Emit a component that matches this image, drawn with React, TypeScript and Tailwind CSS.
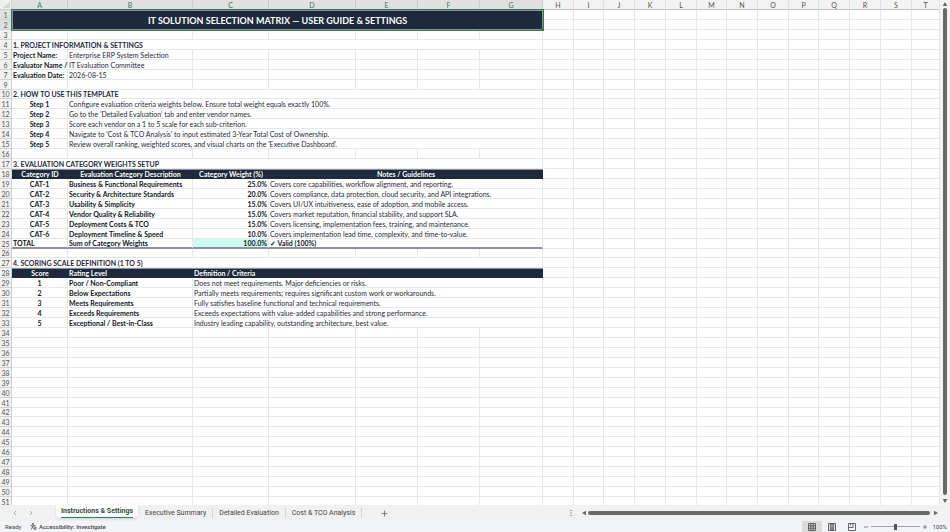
import type { ReactNode } from 'react';

type Cell = {
  text?: ReactNode;
  span?: number;
  rows?: number;
  className: string;
};

const COLUMNS = [
  { name: 'A', width: 'w-[56px]' },
  { name: 'B', width: 'w-[125px]' },
  { name: 'C', width: 'w-[76px]' },
  { name: 'D', width: 'w-[87px]' },
  { name: 'E', width: 'w-[62px]' },
  { name: 'F', width: 'w-[62px]' },
  { name: 'G', width: 'w-[63px]' },
  { name: 'H', width: 'w-[31px]' },
  { name: 'I', width: 'w-[30px]' },
  { name: 'J', width: 'w-[31px]' },
  { name: 'K', width: 'w-[31px]' },
  { name: 'L', width: 'w-[31px]' },
  { name: 'M', width: 'w-[30px]' },
  { name: 'N', width: 'w-[31px]' },
  { name: 'O', width: 'w-[31px]' },
  { name: 'P', width: 'w-[30px]' },
  { name: 'Q', width: 'w-[31px]' },
  { name: 'R', width: 'w-[31px]' },
  { name: 'S', width: 'w-[31px]' },
  { name: 'T', width: '' },
];

const USED = 7;

// Row 8 is hidden in the sheet
const ROWS = Array.from({ length: 51 }, (_, i) => i + 1).filter((n) => n !== 8);

const GRID = 'border-r border-b border-[#e6e8ec]';
const NAVY = 'border-y border-t-[#8b909b] border-b-[#1e293b] bg-[#1e293b] font-bold text-white';
const INPUT = `${GRID} text-[#1f2937]`;
const BOLD = `${GRID} font-bold text-[#111827]`;
const TOTAL = 'border-b-2 border-b-[#8b909b] border-r border-r-[#e6e8ec] font-bold text-[#111827]';

const heading = (text: string): Cell[] => [
  { text, span: 7, className: `${GRID} font-bold text-[#1e293b]` },
];

const project = (label: string, value: string): Cell[] => [
  { text: label, className: BOLD },
  { text: value, className: INPUT },
];

const step = (n: number, text: string): Cell[] => [
  { text: `Step ${n}`, className: `text-center ${BOLD}` },
  { text, span: 6, className: INPUT },
];

const category = (n: number, name: string, weight: string, note: string): Cell[] => [
  { text: `CAT-${n}`, className: `text-center ${BOLD}` },
  { text: name, className: BOLD },
  { text: weight, className: `text-right ${BOLD}` },
  { text: note, span: 4, className: INPUT },
];

const score = (n: number, level: string, text: string): Cell[] => [
  { text: n, className: `text-center ${BOLD}` },
  { text: level, className: BOLD },
  { text, span: 5, className: INPUT },
];

const CONTENT: Record<number, Cell[]> = {
  1: [
    {
      text: 'IT SOLUTION SELECTION MATRIX — USER GUIDE & SETTINGS',
      span: 7,
      rows: 2,
      className:
        'relative border border-[#8b909b] bg-[#1e293b] text-center text-[9px] leading-[16px] font-bold text-white outline-1 outline-[#2f7d4f]',
    },
  ],
  2: [],
  4: heading('1. PROJECT INFORMATION & SETTINGS'),
  5: project('Project Name:', 'Enterprise ERP System Selection'),
  6: project('Evaluator Name /', 'IT Evaluation Committee'),
  7: project('Evaluation Date:', '2026-08-15'),
  10: heading('2. HOW TO USE THIS TEMPLATE'),
  11: step(1, 'Configure evaluation criteria weights below. Ensure total weight equals exactly 100%.'),
  12: step(2, "Go to the 'Detailed Evaluation' tab and enter vendor names."),
  13: step(3, 'Score each vendor on a 1 to 5 scale for each sub-criterion.'),
  14: step(4, "Navigate to 'Cost & TCO Analysis' to input estimated 3-Year Total Cost of Ownership."),
  15: step(5, "Review overall ranking, weighted scores, and visual charts on the 'Executive Dashboard'."),
  17: heading('3. EVALUATION CATEGORY WEIGHTS SETUP'),
  18: [
    { text: 'Category ID', className: `text-center ${NAVY}` },
    { text: 'Evaluation Category Description', className: `text-center ${NAVY}` },
    { text: 'Category Weight (%)', className: `text-center ${NAVY}` },
    { text: 'Notes / Guidelines', span: 4, className: `text-center ${NAVY}` },
  ],
  19: category(1, 'Business & Functional Requirements', '25.0%', 'Covers core capabilities, workflow alignment, and reporting.'),
  20: category(2, 'Security & Architecture Standards', '20.0%', 'Covers compliance, data protection, cloud security, and API integrations.'),
  21: category(3, 'Usability & Simplicity', '15.0%', 'Covers UI/UX intuitiveness, ease of adoption, and mobile access.'),
  22: category(4, 'Vendor Quality & Reliability', '15.0%', 'Covers market reputation, financial stability, and support SLA.'),
  23: category(5, 'Deployment Costs & TCO', '15.0%', 'Covers licensing, implementation fees, training, and maintenance.'),
  24: category(6, 'Deployment Timeline & Speed', '10.0%', 'Covers implementation lead time, complexity, and time-to-value.'),
  25: [
    { text: 'TOTAL', className: TOTAL },
    { text: 'Sum of Category Weights', className: TOTAL },
    { text: '100.0%', className: `bg-[#ccfbf1] text-right ${TOTAL}` },
    { text: '✓ Valid (100%)', span: 4, className: TOTAL },
  ],
  27: heading('4. SCORING SCALE DEFINITION (1 TO 5)'),
  28: [
    { text: 'Score', className: `text-center ${NAVY}` },
    { text: 'Rating Level', className: NAVY },
    { text: 'Definition / Criteria', span: 5, className: NAVY },
  ],
  29: score(1, 'Poor / Non-Compliant', 'Does not meet requirements. Major deficiencies or risks.'),
  30: score(2, 'Below Expectations', 'Partially meets requirements; requires significant custom work or workarounds.'),
  31: score(3, 'Meets Requirements', 'Fully satisfies baseline functional and technical requirements.'),
  32: score(4, 'Exceeds Requirements', 'Exceeds expectations with value-added capabilities and strong performance.'),
  33: score(5, 'Exceptional / Best-in-Class', 'Industry leading capability, outstanding architecture, best value.'),
};

const TABS = ['Instructions & Settings', 'Executive Summary', 'Detailed Evaluation', 'Cost & TCO Analysis'];

function SheetRow({ n }: { n: number }) {
  const cells = CONTENT[n];
  const filled = cells ? cells.reduce((sum, c) => sum + (c.span ?? 1), 0) : 0;
  const blanks = COLUMNS.slice(n === 2 ? USED : filled);

  return (
    <tr className="h-[9px]">
      <th
        scope="row"
        className={`border-r border-b border-[#d0d0d0] p-0 text-center align-bottom font-normal ${
          n <= 2 ? 'bg-[#e0e0e0] text-[#3c7358]' : 'bg-[#f3f3f3] text-[#555555]'
        }`}
      >
        {n}
      </th>
      {cells?.map((cell, i) => (
        <td
          key={i}
          colSpan={cell.span}
          rowSpan={cell.rows}
          className={`px-px py-0 align-bottom ${cell.className}`}
        >
          {cell.text}
          {n === 1 && <span className="absolute -right-[2px] -bottom-[2px] size-[3px] bg-[#2f7d4f]"></span>}
        </td>
      ))}
      {blanks.map((col) => (
        <td key={col.name} className={`p-0 ${GRID}`}></td>
      ))}
    </tr>
  );
}

function Sheet() {
  return (
    <div className="min-w-0 flex-1 overflow-hidden">
      <table className="h-[calc(100%+2px)] w-full table-fixed border-separate border-spacing-0 bg-white font-['Lato',sans-serif] text-[7px] leading-[7px] whitespace-nowrap">
        <colgroup>
          <col className="w-[12px]" />
          {COLUMNS.map((col) => (
            <col key={col.name} className={col.width} />
          ))}
        </colgroup>
        <thead>
          <tr className="h-[10px]">
            <td className="border-r border-b border-[#d0d0d0] bg-[#efefef] p-0">
              <svg viewBox="0 0 12 9" className="block h-[8px] w-[11px]" aria-hidden="true">
                <path d="M11 1v7H3z" fill="#d6d6d6" />
              </svg>
            </td>
            {COLUMNS.map((col, i) => (
              <th
                key={col.name}
                scope="col"
                className={`border-r border-b p-0 text-center align-bottom font-normal ${
                  i < USED
                    ? 'border-r-[#cccccc] border-b-[#2f7d4f] bg-[#e0e0e0] text-[#3c7358]'
                    : 'border-r-[#e2e2e2] border-b-[#c4c4c4] bg-[#f3f3f3] text-[#555555]'
                }`}
              >
                {col.name}
              </th>
            ))}
          </tr>
        </thead>
        <tbody>
          {ROWS.map((n) => (
            <SheetRow key={n} n={n} />
          ))}
        </tbody>
      </table>
    </div>
  );
}

function Arrow({ label, path }: { label: string; path: string }) {
  return (
    <button type="button" aria-label={label} className="flex size-[6px] shrink-0 items-center justify-center">
      <svg viewBox="0 0 6 6" className="size-[6px]" fill="#666666" aria-hidden="true">
        <path d={path} />
      </svg>
    </button>
  );
}

function VerticalScroll() {
  return (
    <div className="flex w-[10px] shrink-0 flex-col items-center justify-between gap-px bg-[#f3f3f3] py-px">
      <Arrow label="Scroll up" path="M3 1l2.3 4H.7z" />
      <div className="mb-[2px] w-[4px] flex-1 rounded-full bg-[#696969]"></div>
      <Arrow label="Scroll down" path="M3 5L.7 1h4.6z" />
    </div>
  );
}

function Chevron({ label, path }: { label: string; path: string }) {
  return (
    <button type="button" aria-label={label}>
      <svg viewBox="0 0 6 6" className="block size-[6px]" fill="none" stroke="#a5a5a5" strokeWidth="0.9" aria-hidden="true">
        <path d={path} />
      </svg>
    </button>
  );
}

function TabBar() {
  return (
    <div className="flex h-[16px] shrink-0 items-start bg-[#f1f1f1] font-['Roboto',sans-serif] text-[7px] leading-[10px] text-[#444444]">
      <div className="flex h-[16px] w-[56px] items-center gap-[10px] pl-[12px]">
        <Chevron label="Previous sheet" path="M4 1L2 3l2 2" />
        <Chevron label="Next sheet" path="M2 1l2 2-2 2" />
      </div>
      <nav className="flex h-[16px] items-start">
        {TABS.map((tab, i) =>
          i === 0 ? (
            <button
              key={tab}
              type="button"
              aria-current="page"
              className="mr-px h-[13px] rounded-b-sm bg-white px-[5px] font-bold text-[#3a4a42] shadow-sm"
            >
              <span className="block h-[12px] border-b border-[#1f8a5b] leading-[11px] whitespace-nowrap">{tab}</span>
            </button>
          ) : (
            <button key={tab} type="button" className="mt-[3px] border-r border-[#d4d4d4] px-[6px] whitespace-nowrap">
              {tab}
            </button>
          ),
        )}
      </nav>
      <button type="button" aria-label="New sheet" className="ml-[19px] flex h-[16px] items-center">
        <svg viewBox="0 0 7 7" className="size-[7px]" stroke="#666666" strokeWidth="0.8" aria-hidden="true">
          <path d="M3.5.5v6M.5 3.5h6" />
        </svg>
      </button>
      <div className="ml-auto flex h-[16px] w-[380px] items-center gap-px pr-[11px]">
        <svg viewBox="0 0 2 8" className="mr-[8px] h-[8px] w-[2px] shrink-0" fill="#555555" aria-hidden="true">
          <path d="M.5 1h1v1h-1zM.5 3.5h1v1h-1zM.5 6h1v1h-1z" />
        </svg>
        <Arrow label="Scroll left" path="M1 3l4-2.3v4.6z" />
        <div className="mr-[2px] h-[4px] flex-1 rounded-full bg-[#696969]"></div>
        <Arrow label="Scroll right" path="M5 3L1 5.3V.7z" />
      </div>
    </div>
  );
}

function StatusBar() {
  return (
    <footer className="flex h-[11px] shrink-0 items-center bg-[#f3f4f8] pr-[3px] pl-[5px] font-['Roboto',sans-serif] text-[6px] leading-[10px] text-[#444444]">
      <span className="w-[25px]">Ready</span>
      <button type="button" className="flex items-center gap-[2px] font-medium whitespace-nowrap">
        <svg viewBox="0 0 14 14" className="size-[7px]" fill="none" stroke="#444444" strokeWidth="1.5" aria-hidden="true">
          <circle cx="6" cy="2" r="1.3" />
          <path d="M1 4.5l3.5 1v3L2.5 13M11 4.5l-3.5 1v2M4.5 5.5h3M4.5 8.5L6 10" />
          <circle cx="10" cy="10.5" r="2.5" />
          <path d="M8.5 12l3-3" />
        </svg>
        Accessibility: Investigate
      </button>
      <div className="ml-auto flex h-[11px]">
        <button type="button" aria-label="Normal view" className="flex h-[11px] w-[20px] items-center justify-center bg-[#dcdcdc]">
          <svg viewBox="0 0 8 8" className="size-[8px]" fill="none" stroke="#444444" strokeWidth="0.8" aria-hidden="true">
            <path d="M.5.5h7v7h-7zM.5 2.8h7M.5 5.2h7M2.8.5v7M5.2.5v7" />
          </svg>
        </button>
        <button type="button" aria-label="Page layout view" className="flex h-[11px] w-[20px] items-center justify-center">
          <svg viewBox="0 0 8 8" className="size-[8px]" fill="none" stroke="#444444" strokeWidth="0.8" aria-hidden="true">
            <path d="M.5.5h7v7h-7zM2.3 1.5h3.4v5H2.3zM3 3h2M3 4.2h2M3 5.4h2" />
          </svg>
        </button>
        <button type="button" aria-label="Page break preview" className="flex h-[11px] w-[20px] items-center justify-center">
          <svg viewBox="0 0 8 8" className="size-[8px]" fill="none" stroke="#444444" strokeWidth="0.8" aria-hidden="true">
            <path d="M.5.5h7v7h-7zM.5 4.5H5v-4M2.5.5v2" />
          </svg>
        </button>
      </div>
      <div className="ml-[2px] flex items-center gap-[3px]">
        <button type="button" aria-label="Zoom out">
          <svg viewBox="0 0 4 4" className="block size-[4px]" stroke="#555555" strokeWidth="0.7" aria-hidden="true">
            <path d="M0 2h4" />
          </svg>
        </button>
        <input
          type="range"
          aria-label="Zoom"
          min={10}
          max={190}
          defaultValue={100}
          className="h-[8px] w-[49px] appearance-none bg-transparent bg-[linear-gradient(#a0a0a0,#a0a0a0)] bg-[length:100%_1px] bg-center bg-no-repeat [&::-webkit-slider-thumb]:h-[6px] [&::-webkit-slider-thumb]:w-[3px] [&::-webkit-slider-thumb]:appearance-none [&::-webkit-slider-thumb]:bg-[#555555]"
        />
        <button type="button" aria-label="Zoom in">
          <svg viewBox="0 0 4 4" className="block size-[4px]" stroke="#555555" strokeWidth="0.7" aria-hidden="true">
            <path d="M0 2h4M2 0v4" />
          </svg>
        </button>
      </div>
      <span className="ml-[5px]">100%</span>
    </footer>
  );
}

export default function App() {
  return (
    <div className="flex h-screen w-full flex-col overflow-hidden bg-[#f1f1f1]">
      <main className="flex min-h-0 flex-1">
        <Sheet />
        <VerticalScroll />
      </main>
      <TabBar />
      <StatusBar />
    </div>
  );
}
